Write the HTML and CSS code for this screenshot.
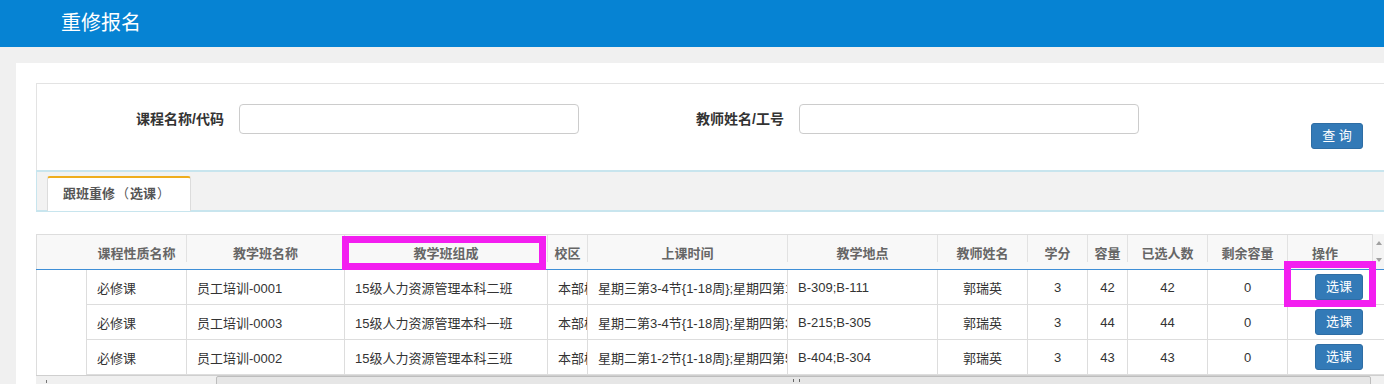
FILE: index.html
```html
<!DOCTYPE html>
<html lang="zh-CN">
<head>
    <meta charset="UTF-8">
    <title>重修报名</title>
    <link rel="stylesheet" href="styles.css">
</head>
<body>
    <div class="top-bar">
        <h1>重修报名</h1>
    </div>

    <div class="main-panel">
        <form class="search-box" onsubmit="return false">
            <div class="search-field">
                <label for="course">课程名称/代码</label>
                <input type="text" id="course">
            </div>
            <div class="search-field">
                <label for="teacher">教师姓名/工号</label>
                <input type="text" id="teacher">
            </div>
            <button type="submit" class="btn-query">查 询</button>
        </form>

        <div class="tab-bar">
            <div class="tab active">跟班重修<span class="paren">（</span>选课<span class="paren">）</span></div>
        </div>

        <div class="grid-wrap">
            <table class="grid">
                <colgroup>
                    <col style="width:50px">
                    <col style="width:100px">
                    <col style="width:158px">
                    <col style="width:203px">
                    <col style="width:40px">
                    <col style="width:200px">
                    <col style="width:150px">
                    <col style="width:90px">
                    <col style="width:60px">
                    <col style="width:40px">
                    <col style="width:80px">
                    <col style="width:80px">
                    <col style="width:97px">
                </colgroup>
                <thead>
                    <tr>
                        <th class="blank"></th>
                        <th>课程性质名称</th>
                        <th>教学班名称</th>
                        <th>教学班组成</th>
                        <th>校区</th>
                        <th>上课时间</th>
                        <th>教学地点</th>
                        <th>教师姓名</th>
                        <th>学分</th>
                        <th>容量</th>
                        <th>已选人数</th>
                        <th>剩余容量</th>
                        <th class="op">操作</th>
                    </tr>
                </thead>
                <tbody>
                    <tr>
                        <td class="blank"></td>
                        <td>必修课</td>
                        <td>员工培训-0001</td>
                        <td>15级人力资源管理本科二班</td>
                        <td>本部校区</td>
                        <td>星期三第3-4节{1-18周};星期四第1-2节{1-18周}</td>
                        <td>B-309;B-111</td>
                        <td class="center">郭瑞英</td>
                        <td class="center">3</td>
                        <td class="center">42</td>
                        <td class="center">42</td>
                        <td class="center">0</td>
                        <td class="op"><button class="btn-pick">选课</button></td>
                    </tr>
                    <tr>
                        <td class="blank"></td>
                        <td>必修课</td>
                        <td>员工培训-0003</td>
                        <td>15级人力资源管理本科一班</td>
                        <td>本部校区</td>
                        <td>星期二第3-4节{1-18周};星期四第3-4节{1-18周}</td>
                        <td>B-215;B-305</td>
                        <td class="center">郭瑞英</td>
                        <td class="center">3</td>
                        <td class="center">44</td>
                        <td class="center">44</td>
                        <td class="center">0</td>
                        <td class="op"><button class="btn-pick">选课</button></td>
                    </tr>
                    <tr>
                        <td class="blank"></td>
                        <td>必修课</td>
                        <td>员工培训-0002</td>
                        <td>15级人力资源管理本科三班</td>
                        <td>本部校区</td>
                        <td>星期二第1-2节{1-18周};星期四第5-6节{1-18周}</td>
                        <td>B-404;B-304</td>
                        <td class="center">郭瑞英</td>
                        <td class="center">3</td>
                        <td class="center">43</td>
                        <td class="center">43</td>
                        <td class="center">0</td>
                        <td class="op"><button class="btn-pick">选课</button></td>
                    </tr>
                </tbody>
            </table>

            <!-- vertical scrollbar stub over the last column -->
            <div class="v-scroll">
                <span class="arrow-up"></span>
                <span class="arrow-down"></span>
            </div>

            <div class="h-scroll">
                <span class="h-arrow"></span>
                <div class="h-thumb"><span class="grip"></span></div>
            </div>

            <!-- annotation marks -->
            <div class="mark mark-head"></div>
            <div class="mark mark-btn"></div>
        </div>
    </div>
</body>
</html>
```

FILE: styles.css
```css
body {
    margin: 0;
    padding: 0;
    background-color: #f0f0f0;
    font-family: "Liberation Sans", "Noto Sans CJK SC", sans-serif;
    font-size: 13px;
    color: #333;
    overflow: hidden;
    height: 384px;
}

.top-bar {
    height: 47px;
    background-color: #0683d3;
    padding-left: 61px;
    display: flex;
    align-items: center;
}

.top-bar h1 {
    margin: 0;
    font-size: 20px;
    font-weight: normal;
    color: #ffffff;
    line-height: 24px;
    margin-top: -1px;
}

.main-panel {
    background: #ffffff;
    margin: 16px 0 0 16px;
    width: 1400px;
    padding: 20px 0 0 20px;
    height: 400px;
}

.search-box {
    display: flex;
    align-items: flex-start;
    border: 1px solid #e3e3e3;
    border-bottom: none;
    padding: 20px 0 21px 0;
    height: 45px;
}

.search-field {
    display: flex;
    align-items: center;
}

.search-field label {
    width: 187px;
    text-align: right;
    padding-right: 15px;
    font-size: 14px;
    font-weight: bold;
    color: #333;
    line-height: 20px;
}

.search-field + .search-field label {
    width: 205px;
}

.search-field input {
    width: 340px;
    height: 30px;
    box-sizing: border-box;
    border: 1px solid #ccc;
    border-radius: 4px;
    padding: 0 8px;
    font-size: 13px;
}

.btn-query {
    margin: 19px 0 0 172px;
    width: 52px;
    height: 26px;
    padding: 0;
    background-color: #337ab7;
    border: 1px solid #2e6da4;
    border-radius: 3px;
    color: #ffffff;
    font-family: inherit;
    font-size: 13px;
    line-height: 24px;
    cursor: pointer;
}

.tab-bar {
    background-color: #f2f2f2;
    border: 1px solid #c8e5ee;
    border-width: 2px 1px 2px 1px;
    height: 38px;
    padding-left: 10px;
    display: flex;
    align-items: flex-end;
}

.tab {
    background: #ffffff;
    border: 1px solid #dcdcdc;
    border-top: 2px solid #efad1e;
    border-bottom: none;
    border-radius: 3px 3px 0 0;
    box-sizing: border-box;
    width: 144px;
    height: 35px;
    padding-left: 15px;
    font-weight: bold;
    color: #555;
    font-size: 13px;
    line-height: 32px;
    margin-bottom: -1px;
}

/* brackets sit centred in their box, as in the original font */
.tab .paren {
    display: inline-block;
    width: 13px;
    padding: 0 1px;
    text-align: center;
    font-weight: normal;
}

.grid-wrap {
    position: relative;
    margin-top: 22px;
    width: 1348px;
}

.grid {
    border-collapse: collapse;
    table-layout: fixed;
    width: 1348px;
    border-left: 1px solid #ddd;
}

.grid th {
    position: relative;
    height: 34px;
    background-color: #f8f8f8;
    border-top: 1px solid #ddd;
    border-bottom: 1px solid #3f8fd7;
    color: #666;
    font-weight: bold;
    font-size: 13px;
    text-align: center;
    white-space: nowrap;
    overflow: hidden;
    padding: 0;
}

.grid th::after {
    content: "";
    position: absolute;
    right: 0;
    top: 0;
    bottom: 7px;
    border-right: 1px solid #e2e2e2;
}

.grid th.blank::after,
.grid th.op::after {
    display: none;
}

.grid td {
    height: 34px;
    border: 1px solid #dddddd;
    border-top: none;
    padding: 0 10px;
    white-space: nowrap;
    overflow: hidden;
    color: #333;
}

.grid td.blank {
    border-bottom: none;
    padding: 0;
}

.grid td.center {
    text-align: center;
    padding: 0;
}

.grid th.op {
    padding-right: 22px;
}

.grid td.op {
    padding: 0 0 0 27px;
}

.btn-pick {
    display: block;
    width: 48px;
    height: 26px;
    padding: 0;
    background-color: #337ab7;
    border: 1px solid #2e6da4;
    border-radius: 3px;
    color: #ffffff;
    font-family: inherit;
    font-size: 13px;
    line-height: 24px;
    cursor: pointer;
}

.v-scroll {
    position: absolute;
    right: 0;
    top: 0;
    width: 11px;
    height: 35px;
    background: #f4f4f4;
    border-left: 1px solid #e0e0e0;
}

.v-scroll span {
    position: absolute;
    left: 3px;
    width: 0;
    height: 0;
    border-left: 3px solid transparent;
    border-right: 3px solid transparent;
}

.arrow-up {
    top: 7px;
    border-bottom: 4px solid #a0a0a0;
}

.arrow-down {
    top: 24px;
    border-top: 4px solid #a0a0a0;
}

.h-scroll {
    position: relative;
    height: 17px;
    background: #f0f0f0;
    border-top: 1px solid #cfcfcf;
}

.h-arrow {
    position: absolute;
    left: 10px;
    top: 4px;
    width: 1px;
    height: 3px;
    background: #777;
}

.h-thumb {
    position: absolute;
    left: 180px;
    right: 13px;
    top: 0;
    height: 15px;
    background: #e6e6e6;
    border: 1px solid #bdbdbd;
    border-radius: 2px;
}

.grip {
    position: absolute;
    left: 576px;
    top: 2px;
    width: 5px;
    height: 3px;
    border-left: 1px solid #666;
    border-right: 1px solid #666;
}

.mark {
    position: absolute;
    border: 7px solid #f31ef0;
    box-sizing: border-box;
}

.mark-head {
    left: 306px;
    top: 2px;
    width: 204px;
    height: 34px;
}

.mark-btn {
    left: 1248px;
    top: 27px;
    width: 92px;
    height: 46px;
}
```
